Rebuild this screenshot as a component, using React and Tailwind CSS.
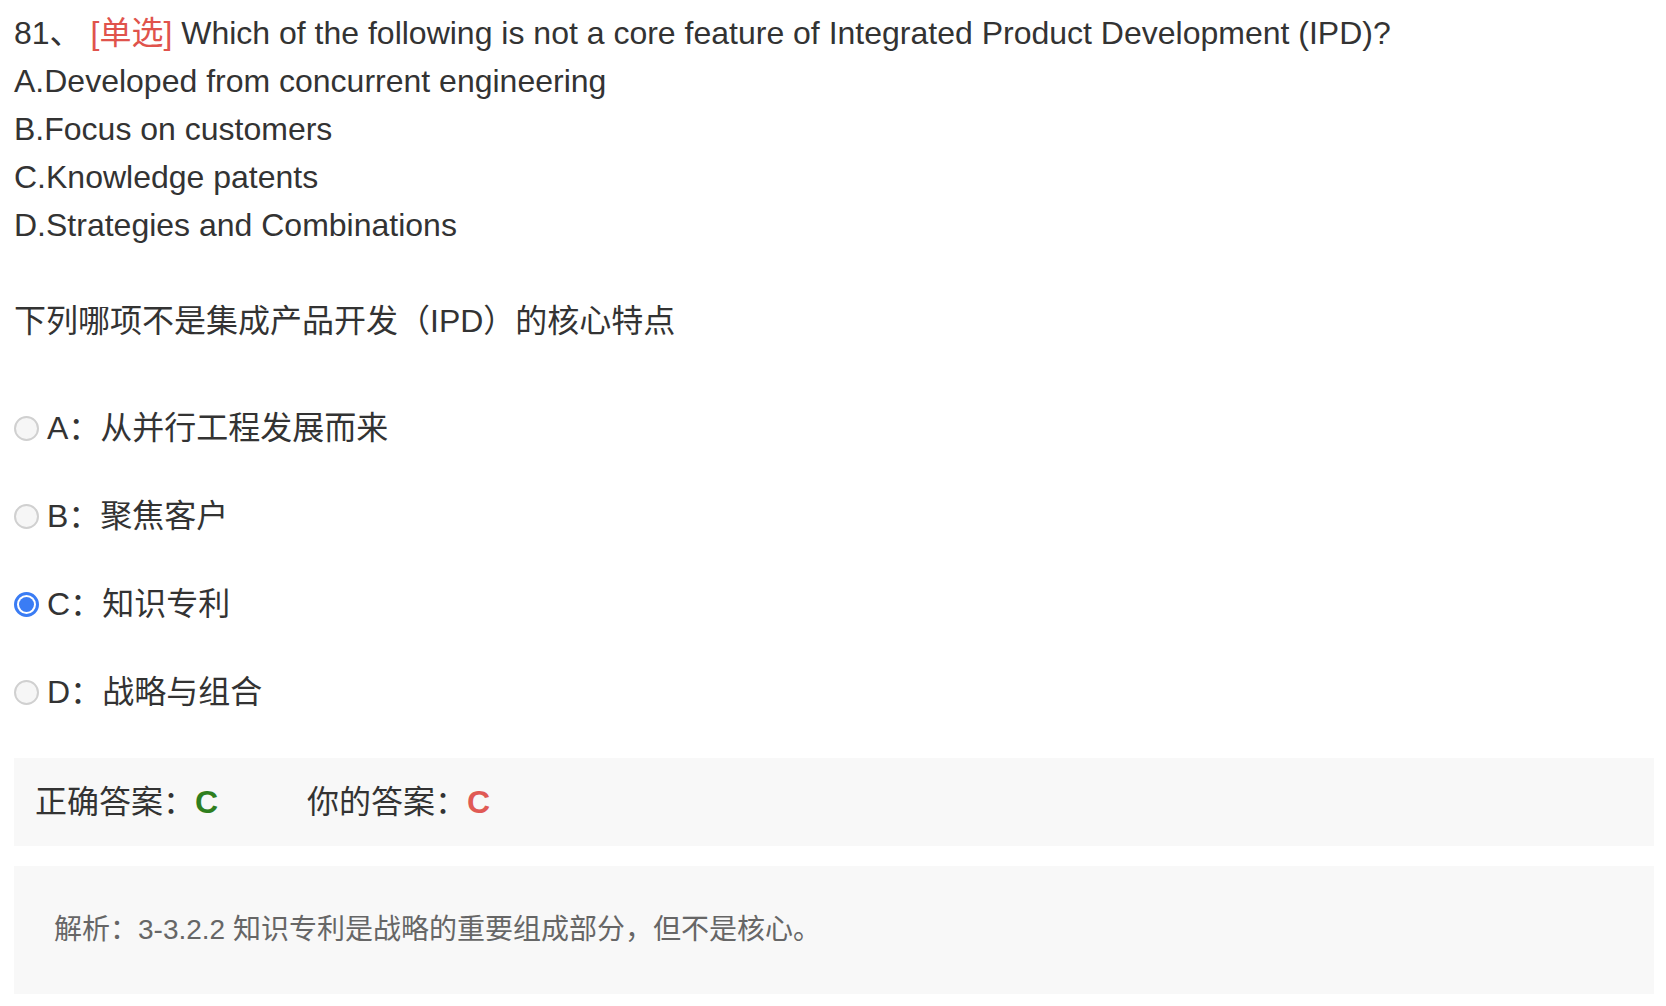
const FONT = "font-['Liberation_Sans','Noto_Sans_CJK_SC',sans-serif]";

const options = [
  { key: "A", text: "从并行工程发展而来" },
  { key: "B", text: "聚焦客户" },
  { key: "C", text: "知识专利", checked: true },
  { key: "D", text: "战略与组合" },
];

const Radio = ({ checked }) => {
  if (checked) {
    return (
      <div className="w-[25px] h-[25px] rounded-full border-[3px] border-[#3a7cf4] bg-white flex items-center justify-center shrink-0">
        <div className="w-[15px] h-[15px] rounded-full bg-[#3a7cf4]" />
      </div>
    );
  }
  return (
    <div className="w-[25px] h-[25px] rounded-full border-[2px] border-[#d0d0d0] bg-[#f6f6f6] shrink-0" />
  );
};

const App = () => {
  return (
    <div className={`${FONT} bg-white text-[#333] min-h-screen pl-[14px] pr-[12px] pt-[9px]`}>
      <div className="text-[32px] leading-[48px]">
        <p>
          81、 <span className="text-[#e0534c]">[单选]</span> Which of the
          following is not a core feature of Integrated Product Development
          (IPD)?
        </p>
        <p>A.Developed from concurrent engineering</p>
        <p>B.Focus on customers</p>
        <p>C.Knowledge patents</p>
        <p>D.Strategies and Combinations</p>
        <p className="mt-[48px]">下列哪项不是集成产品开发（IPD）的核心特点</p>
      </div>

      <div className="mt-[39px] flex flex-col">
        {options.map((o) => (
          <label key={o.key} className="h-[88px] flex items-center">
            <Radio checked={o.checked} />
            <span className="ml-[8px] text-[32px] leading-[48px]">
              {o.key}：{o.text}
            </span>
          </label>
        ))}
      </div>

      <div className="mt-[22px] h-[88px] bg-[#f8f8f8] flex items-center pl-[21px] text-[32px] leading-[48px]">
        <span className="w-[272px]">
          正确答案：<span className="text-[#2f7f1f] font-bold">C</span>
        </span>
        <span>
          你的答案：<span className="text-[#e05a55] font-bold">C</span>
        </span>
      </div>

      <div className="mt-[20px] h-[128px] bg-[#f8f8f8] flex items-center pl-[40px] text-[28px] text-[#666]">
        解析：3-3.2.2 知识专利是战略的重要组成部分，但不是核心。
      </div>
    </div>
  );
};

export default App;
